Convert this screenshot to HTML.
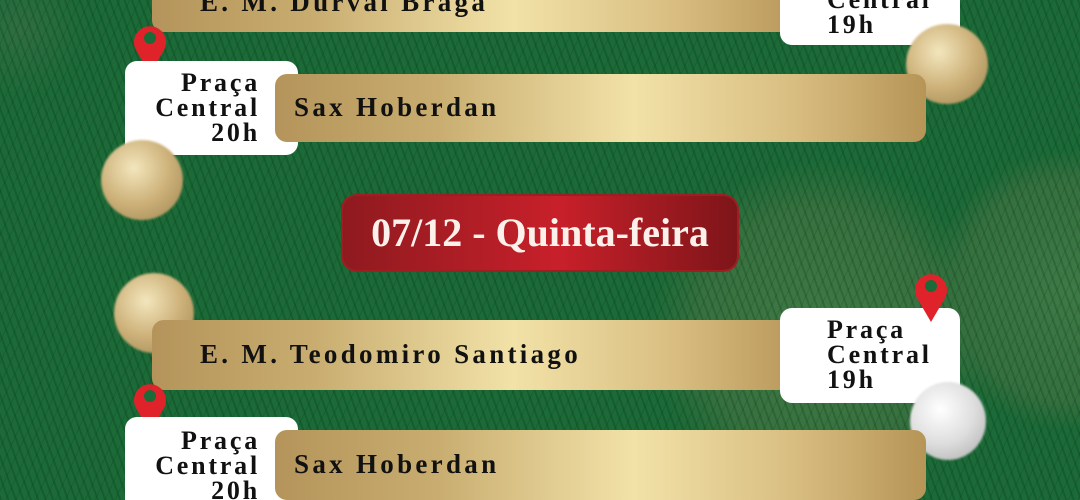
<!DOCTYPE html>
<html><head><meta charset="utf-8"><style>
*{margin:0;padding:0;box-sizing:border-box}
html,body{width:1080px;height:500px;overflow:hidden}
body{position:relative;
background:radial-gradient(circle at 820px 330px,#3f7a45 0,#37713f 120px,rgba(0,0,0,0) 170px),radial-gradient(circle at 1070px 290px,#3d7a46 0,#35703f 110px,rgba(0,0,0,0) 140px),radial-gradient(circle at 20px 30px,#2f6e40 0,rgba(0,0,0,0) 70px),#1b6a37;
font-family:"Liberation Serif",serif;}
.tex{position:absolute;inset:0;background:repeating-linear-gradient(70deg,rgba(0,30,10,.18) 0 2px,rgba(0,0,0,0) 2px 7px),repeating-linear-gradient(115deg,rgba(0,40,15,.15) 0 1px,rgba(0,0,0,0) 1px 9px)}
.gold{position:absolute;border-radius:12px;background:linear-gradient(90deg,#b4945a 0%,#c9ad70 25%,#f2e2a8 55%,#d8bd80 80%,#b69557 100%);}
.white{position:absolute;background:#fff;border-radius:12px;}
.t{position:absolute;font-weight:bold;color:#111;font-size:27px;letter-spacing:3.3px;line-height:25px;white-space:nowrap}
.r{font-size:26px;letter-spacing:2.8px}
.orn{position:absolute;border-radius:50%;filter:blur(1px)}
.g{background:radial-gradient(circle at 40% 35%,#f3e6bd,#cdb179 50%,#9d8350 100%)}
.s{background:radial-gradient(circle at 40% 35%,#fff,#dedede 50%,#a9a9a9 100%)}
.pin{position:absolute;width:36px;height:54px}
</style></head><body>
<div class="tex"></div>

<div class="gold" style="left:152px;top:-30px;width:656px;height:62px"></div>
<div class="t" style="left:200px;top:-10px">E. M. Durval Braga</div>
<div class="white" style="left:780px;top:-40px;width:180px;height:85px"></div>
<div class="t r" style="left:827px;top:-13px">Central<br>19h</div>
<div class="orn g" style="left:906px;top:24px;width:82px;height:80px"></div>

<svg class="pin" style="left:132px;top:20px" viewBox="0 0 36 54"><path d="M18 54 L4 30 A16 16 0 1 1 32 30 Z" fill="#e0232b"/><circle cx="18" cy="18" r="6" fill="#1b6a37"/></svg>
<div class="white" style="left:125px;top:61px;width:173px;height:94px"></div>
<div class="t r" style="left:130px;top:70px;width:130px;text-align:right">Praça<br>Central<br>20h</div>
<div class="gold" style="left:275px;top:74px;width:651px;height:68px"></div>
<div class="t" style="left:294px;top:95px">Sax Hoberdan</div>
<div class="orn g" style="left:101px;top:140px;width:82px;height:80px"></div>

<div style="position:absolute;left:343px;top:196px;width:394px;height:74px;border-radius:14px;background:linear-gradient(90deg,#8e1a1f,#c8202a 55%,#7d1519);box-shadow:0 0 0 2px #a01d22"></div>
<div style="position:absolute;left:343px;top:196px;width:394px;height:74px;line-height:74px;text-align:center;color:#fbf1ea;font-size:40px;font-weight:bold">07/12 - Quinta-feira</div>

<div class="orn g" style="left:114px;top:273px;width:80px;height:80px"></div>
<div class="gold" style="left:152px;top:320px;width:656px;height:70px"></div>
<div class="t" style="left:200px;top:342px">E. M. Teodomiro Santiago</div>
<div class="white" style="left:780px;top:308px;width:180px;height:95px"></div>
<div class="t r" style="left:827px;top:317px">Praça<br>Central<br>19h</div>
<svg class="pin" style="left:913px;top:268px" viewBox="0 0 36 54"><path d="M18 54 L4 30 A16 16 0 1 1 32 30 Z" fill="#e0232b"/><circle cx="18" cy="18" r="6" fill="#1b6a37"/></svg>
<div class="orn s" style="left:910px;top:382px;width:76px;height:78px"></div>

<svg class="pin" style="left:132px;top:378px" viewBox="0 0 36 54"><path d="M18 54 L4 30 A16 16 0 1 1 32 30 Z" fill="#e0232b"/><circle cx="18" cy="18" r="6" fill="#1b6a37"/></svg>
<div class="white" style="left:125px;top:417px;width:173px;height:100px"></div>
<div class="t r" style="left:130px;top:428px;width:130px;text-align:right">Praça<br>Central<br>20h</div>
<div class="gold" style="left:275px;top:430px;width:651px;height:70px"></div>
<div class="t" style="left:294px;top:452px">Sax Hoberdan</div>
</body></html>
